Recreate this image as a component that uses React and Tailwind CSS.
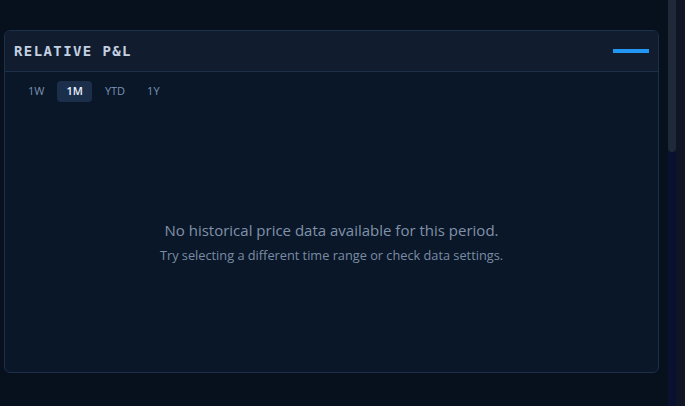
import React from "react";

export default function App() {
  const tabs = ["1W", "1M", "YTD", "1Y"];
  return (
    <div className="flex h-[406px] w-[685px] overflow-hidden bg-[#07101d]" style={{ fontFamily: '"Open Sans", "Noto Sans", sans-serif' }}>
      <div className="flex-1 pl-1 pr-[9px] pt-[30px]">
        <div className="flex h-[343px] flex-col overflow-hidden rounded-md border border-[#1c3049] bg-[#0a1729]">
          <div className="flex h-[41px] shrink-0 items-center justify-between border-b border-[#1c3049] bg-[#111d2e] pl-[9px] pr-[9px]">
            <span className="text-[14px] font-bold tracking-[0.1em] text-[#c3d0e2]" style={{ fontFamily: '"DejaVu Sans Mono", monospace' }}>
              RELATIVE P&amp;L
            </span>
            <div className="h-1 w-9 bg-[#2196f3]" />
          </div>
          <div className="flex gap-1 pl-[14px] pt-[9px]">
            {tabs.map((t) => (
              <div
                key={t}
                className={
                  t === "1M"
                    ? "flex h-[21px] items-center rounded bg-[#1b2f4b] px-[9px] text-[11px] font-semibold text-[#e8f1ff]"
                    : "flex h-[21px] items-center rounded px-[9px] text-[11px] text-[#7a93b3]"
                }
              >
                {t}
              </div>
            ))}
          </div>
          <div className="flex flex-1 flex-col items-center justify-center pt-[10px]">
            <div className="text-[15px] text-[#8192a8]">No historical price data available for this period.</div>
            <div className="mt-1 text-[12.75px] text-[#7a8ca3]">Try selecting a different time range or check data settings.</div>
          </div>
        </div>
      </div>
      <div className="flex w-2 flex-col bg-[#0a1030]">
        <div className="h-[152px] rounded-b-sm bg-[#1f2937]" />
      </div>
      <div className="w-[9px] bg-[#0f1524]" />
    </div>
  );
}
